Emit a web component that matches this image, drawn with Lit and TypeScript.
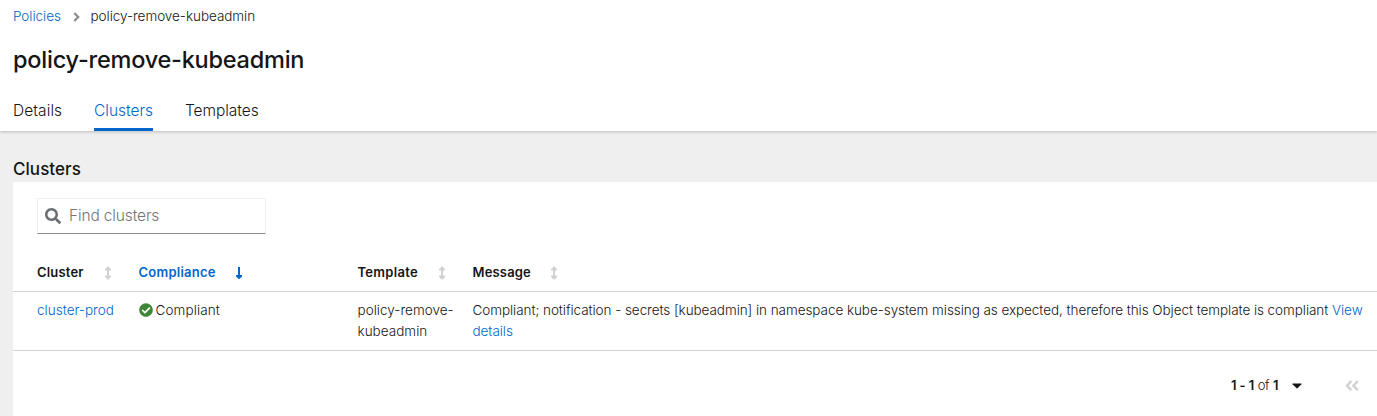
import { LitElement, html, css, svg } from "lit";
import { customElement } from "lit/decorators.js";

const sortIcon = svg`<svg class="sort" width="8" height="14" viewBox="0 0 8 14"><path fill="currentColor" d="M4 0 7 3.200V4.500H5V9.500H7V10.800L4 14 1 10.800V9.500H3V4.500H1V3.200z"/></svg>`;
const downIcon = svg`<svg class="sort" width="6" height="14" viewBox="0 0 6 14"><path fill="currentColor" d="M2 1H4V9H6V10.400L3 13.200 0 10.400V9H2z"/></svg>`;

@customElement("app-root")
export class AppRoot extends LitElement {
  static styles = css`
    :host {
      display: block;
      height: 416px;
      overflow: hidden;
      background: #efefef;
      color: #151515;
      font: 360 13.5px/21px "Inter", "Open Sans", sans-serif;
    }
    * { box-sizing: border-box; }
    svg { display: block; flex: none; }
    a { color: #06c; text-decoration: none; }
    .top {
      position: relative;
      height: 131px;
      padding: 6px 0 0 13px;
      background: #fff;
      box-shadow: 0 1px 3px rgba(3, 3, 3, 0.22);
    }
    .crumbs { display: flex; align-items: center; height: 21px; white-space: nowrap; }
    .crumbs svg { margin: 0 10.5px 0 12px; color: #8a8d90; }
    .crumbs a { width: 48px; letter-spacing: -0.03px; }
    .crumb { letter-spacing: -0.04px; }
    h1 { margin: 17px 0 0; font-size: 23.5px; line-height: 31px; font-weight: 450; letter-spacing: -0.23px; white-space: nowrap; }
    .tabs { display: flex; gap: 32px; margin-top: 16px; font-size: 15.5px; line-height: 24px; }
    .tab { height: 40px; padding-top: 8px; white-space: nowrap; }
    .details { width: 49px; letter-spacing: 0.08px; }
    .clusters { width: 59px; letter-spacing: 0; color: #06c; border-bottom: 3px solid #06c; }
    .templates { letter-spacing: -0.05px; }
    h2 { margin: 26px 0 0 13px; height: 25px; font-size: 17px; line-height: 24px; font-weight: 500; letter-spacing: 0.05px; }
    .card { margin-left: 13px; height: 234px; background: #fff; padding-top: 16px; }
    .search {
      display: flex; align-items: center; gap: 8px; width: 229px; height: 36px; margin-left: 24px; padding: 0 0 1px 7px;
      border: 1px solid #f0f0f0; border-bottom-color: #8a8d90; font-size: 15.5px; color: #757575; letter-spacing: -0.14px;
    }
    .search svg { color: #6a6e73; }
    .row { display: grid; grid-template-columns: 101.5px 219px 115px 1fr; padding-left: 24px; border-bottom: 1px solid #d2d2d2; }
    .head { height: 58px; padding-top: 28px; font-weight: 600; font-size: 13px; }
    .th { display: flex; align-items: center; height: 21px; letter-spacing: 0.17px; }
    .th .label { white-space: nowrap; }
    .sort { color: #d2d2d2; }
    .w1 { width: 67px; } .w2 { width: 97.5px; letter-spacing: 0.25px; } .w3 { width: 80px; letter-spacing: 0.3px; } .w4 { width: 77px; }
    .active, .active .sort { color: #06c; }
    .body { height: 59px; padding-top: 8px; letter-spacing: -0.06px; white-space: nowrap; }
    .name, .template { letter-spacing: 0.02px; }
    .status { display: flex; align-items: center; gap: 3px; height: 20px; }
    .state { letter-spacing: 0.12px; line-height: 20px; }
    .pager { display: flex; align-items: center; height: 21px; margin-top: 24px; padding-left: 1218px; white-space: nowrap; font-size: 13px; letter-spacing: -0.4px; word-spacing: 0.6px; }
    .pager b { font-weight: 600; }
    .range { width: 61px; }
    .first { margin-left: 43px; color: #d2d2d2; }
  `;

  render() {
    return html`
      <header class="top">
        <nav class="crumbs">
          <a>Policies</a>
          <svg width="7" height="10" viewBox="0 0 7 10"><path d="M1.300 1 5.200 5 1.300 9" fill="none" stroke="currentColor" stroke-width="2.300"/></svg>
          <span class="crumb">policy-remove-kubeadmin</span>
        </nav>
        <h1><span>policy-remove-kubeadmin</span></h1>
        <nav class="tabs">
          <div class="tab details">Details</div>
          <div class="tab clusters">Clusters</div>
          <div class="tab templates"><span>Templates</span></div>
        </nav>
      </header>
      <h2><span>Clusters</span></h2>
      <section class="card">
        <div class="search">
          <svg width="16" height="16" viewBox="0 0 512 512"><path fill="currentColor" d="M505 442.700 405.300 343c-4.500-4.500-10.600-7-17-7H372c27.600-35.300 44-79.700 44-128C416 93.100 322.900 0 208 0S0 93.100 0 208s93.100 208 208 208c48.300 0 92.700-16.400 128-44v16.300c0 6.400 2.500 12.500 7 17l99.700 99.700c9.400 9.400 24.600 9.400 33.900 0l28.300-28.300c9.400-9.400 9.400-24.600.1-34zM208 336c-70.700 0-128-57.200-128-128 0-70.700 57.200-128 128-128 70.700 0 128 57.200 128 128 0 70.700-57.200 128-128 128z"/></svg>
          <span>Find clusters</span>
        </div>
        <div class="row head">
          <div class="th"><span class="label w1">Cluster</span>${sortIcon}</div>
          <div class="th active"><span class="label w2">Compliance</span>${downIcon}</div>
          <div class="th"><span class="label w3">Template</span>${sortIcon}</div>
          <div class="th"><span class="label w4">Message</span>${sortIcon}</div>
        </div>
        <div class="row body">
          <a class="name">cluster-prod</a>
          <div class="status">
            <svg width="14" height="14" viewBox="0 0 512 512"><path fill="#3e8635" d="M504 256c0 136.967-111.033 248-248 248S8 392.967 8 256 119.033 8 256 8s248 111.033 248 248zM227.314 387.314l184-184c6.248-6.248 6.248-16.379 0-22.627l-22.627-22.627c-6.248-6.249-16.379-6.249-22.628 0L216 308.118l-70.059-70.059c-6.248-6.248-16.379-6.248-22.628 0l-22.627 22.627c-6.248 6.248-6.248 16.379 0 22.627l104 104c6.249 6.249 16.379 6.249 22.628.001z"/></svg>
            <span class="state">Compliant</span>
          </div>
          <div class="template">policy-remove-<br />kubeadmin</div>
          <div class="message"><span class="text">Compliant; notification - secrets [kubeadmin] in namespace kube-system missing as expected, therefore this Object template is compliant</span> <a>View<br />details</a></div>
        </div>
        <div class="pager">
          <span class="range"><b>1 - 1</b> of <b>1</b></span>
          <svg width="10" height="6" viewBox="0 0 10 6"><path d="M.8.5h8.400a.5.500 0 0 1 .3.800L5.400 5.200a.6.600 0 0 1-.8 0L.5 1.300A.5.500 0 0 1 .8.500z" fill="#151515"/></svg>
          <svg class="first" width="14" height="12" viewBox="0 0 14 12"><path d="M6.300 1.200 2 5.700l4.300 4.500M12.700 1.200 8.400 5.700l4.300 4.500" fill="none" stroke="currentColor" stroke-width="2.400"/></svg>
        </div>
      </section>
    `;
  }
}
